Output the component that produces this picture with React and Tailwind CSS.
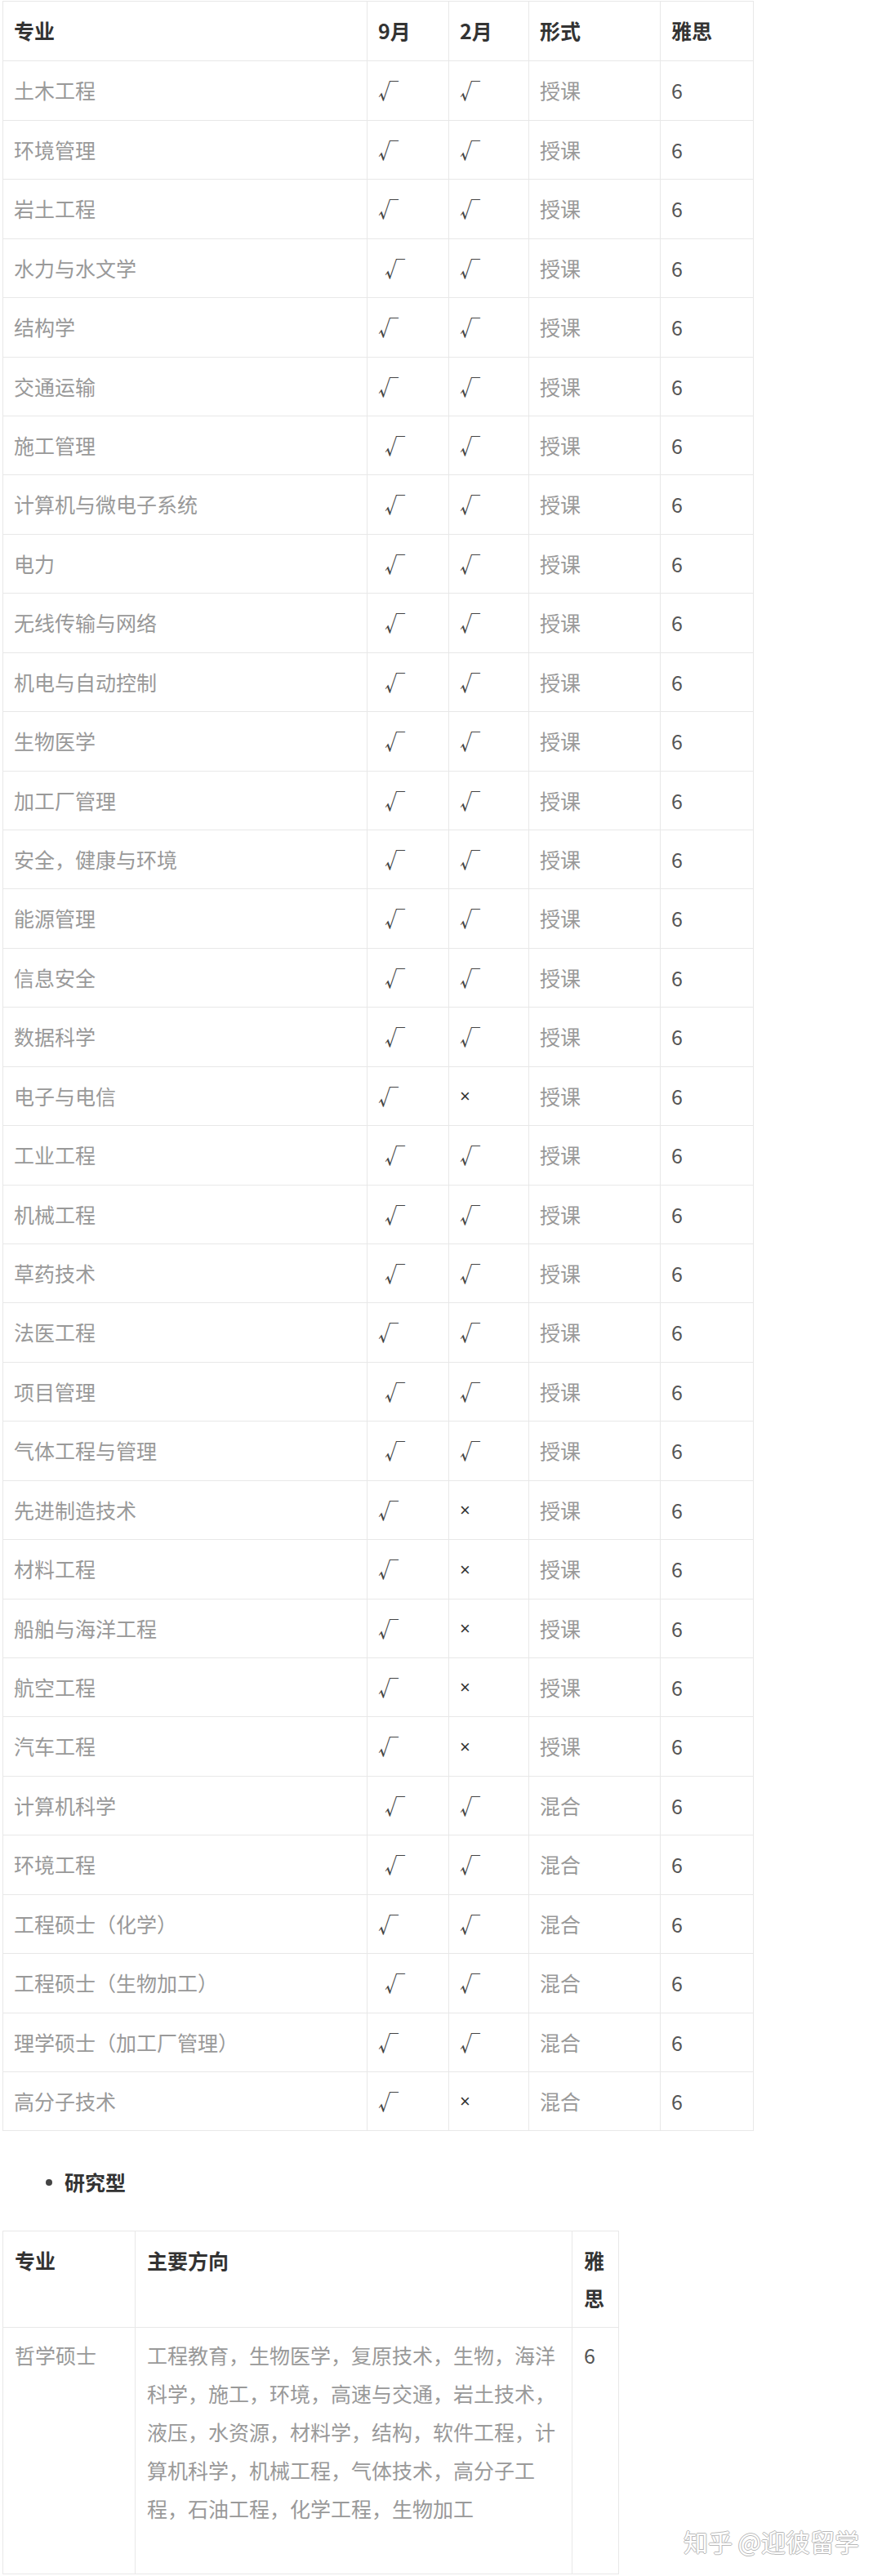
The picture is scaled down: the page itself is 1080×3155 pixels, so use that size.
const cols = "grid grid-cols-[446px_100px_98px_161px_114px]";

// [name, sep shifted, feb ("v" | "x"), mode]
const rows = [
  ["土木工程", false, "v", "授课"],
  ["环境管理", false, "v", "授课"],
  ["岩土工程", false, "v", "授课"],
  ["水力与水文学", true, "v", "授课"],
  ["结构学", false, "v", "授课"],
  ["交通运输", false, "v", "授课"],
  ["施工管理", true, "v", "授课"],
  ["计算机与微电子系统", true, "v", "授课"],
  ["电力", true, "v", "授课"],
  ["无线传输与网络", true, "v", "授课"],
  ["机电与自动控制", true, "v", "授课"],
  ["生物医学", true, "v", "授课"],
  ["加工厂管理", true, "v", "授课"],
  ["安全，健康与环境", true, "v", "授课"],
  ["能源管理", true, "v", "授课"],
  ["信息安全", true, "v", "授课"],
  ["数据科学", true, "v", "授课"],
  ["电子与电信", false, "x", "授课"],
  ["工业工程", true, "v", "授课"],
  ["机械工程", true, "v", "授课"],
  ["草药技术", true, "v", "授课"],
  ["法医工程", false, "v", "授课"],
  ["项目管理", true, "v", "授课"],
  ["气体工程与管理", true, "v", "授课"],
  ["先进制造技术", false, "x", "授课"],
  ["材料工程", false, "x", "授课"],
  ["船舶与海洋工程", false, "x", "授课"],
  ["航空工程", false, "x", "授课"],
  ["汽车工程", false, "x", "授课"],
  ["计算机科学", true, "v", "混合"],
  ["环境工程", true, "v", "混合"],
  ["工程硕士（化学）", false, "v", "混合"],
  ["工程硕士（生物加工）", true, "v", "混合"],
  ["理学硕士（加工厂管理）", false, "v", "混合"],
  ["高分子技术", false, "x", "混合"],
];

const cell = "flex items-center pl-[13px] border-r border-[#e8e8e8]";

function Check() {
  return <span className="text-[#444]">√</span>;
}

function Cross() {
  return (
    <span className="text-[#333] text-[22px] font-['Liberation_Sans',sans-serif]">
      ×
    </span>
  );
}

export default function App() {
  return (
    <div className="relative w-[1080px] h-[3155px] bg-white pt-px pl-[3px] font-['Noto_Sans_CJK_SC',sans-serif] text-[25px]">
      {/* TAUGHT PROGRAMMES */}
      <div className="w-[920px] border-l border-t border-[#e8e8e8]">
        <div className={`${cols} h-[73px] border-b border-[#e8e8e8] font-bold text-[#333]`}>
          <div className={cell}>专业</div>
          <div className={cell}>9月</div>
          <div className={cell}>2月</div>
          <div className={cell}>形式</div>
          <div className={cell}>雅思</div>
        </div>

        {rows.map(([name, shifted, feb, mode], i) => (
          <div
            key={name}
            className={`${cols} ${
              i % 7 === 0 || i % 7 === 2 || i % 7 === 4 ? "h-[73px]" : "h-[72px]"
            } border-b border-[#e8e8e8]`}
          >
            <div className={`${cell} text-[#999]`}>{name}</div>
            <div className={`${cell} ${shifted ? "pl-[21px]" : ""}`}>
              <Check />
            </div>
            <div className={cell}>{feb === "v" ? <Check /> : <Cross />}</div>
            <div className={`${cell} text-[#999]`}>{mode}</div>
            <div className={`${cell} text-[#555]`}>6</div>
          </div>
        ))}
      </div>

      {/* BULLET */}
      <div className="mt-10 h-[46px] flex items-center pl-[53px] font-bold text-[#333]">
        <span className="w-2 h-2 rounded-full bg-[#444] mr-[15px]"></span>
        研究型
      </div>

      {/* RESEARCH PROGRAMMES */}
      <div className="mt-9 w-[755px] border-l border-t border-[#e8e8e8]">
        <div className="grid grid-cols-[162px_535px_57px] h-[118px] border-b border-[#e8e8e8] font-bold text-[#333] leading-[46px]">
          <div className="pt-3 pl-[14px] border-r border-[#e8e8e8]">专业</div>
          <div className="pt-3 pl-[14px] border-r border-[#e8e8e8]">主要方向</div>
          <div className="pt-3 pl-[14px] pr-[14px] border-r border-[#e8e8e8]">雅思</div>
        </div>
        <div className="grid grid-cols-[162px_535px_57px] h-[302px] border-b border-[#e8e8e8] leading-[47px]">
          <div className="pt-[10px] pl-[14px] border-r border-[#e8e8e8] text-[#999]">
            哲学硕士
          </div>
          <div className="pt-[10px] pl-[14px] pr-[14px] border-r border-[#e8e8e8] text-[#999]">
            工程教育，生物医学，复原技术，生物，海洋科学，施工，环境，高速与交通，岩土技术，液压，水资源，材料学，结构，软件工程，计算机科学，机械工程，气体技术，高分子工程，石油工程，化学工程，生物加工
          </div>
          <div className="pt-[10px] pl-[14px] border-r border-[#e8e8e8] text-[#555]">6</div>
        </div>
      </div>

      {/* WATERMARK */}
      <div className="absolute right-[28px] top-[3094px] text-[30px] leading-[36px] text-white [text-shadow:1px_0_0_#b8b8b8,-1px_0_0_#b8b8b8,0_1px_0_#b8b8b8,0_-1px_0_#b8b8b8]">
        知乎 @迎彼留学
      </div>
    </div>
  );
}
